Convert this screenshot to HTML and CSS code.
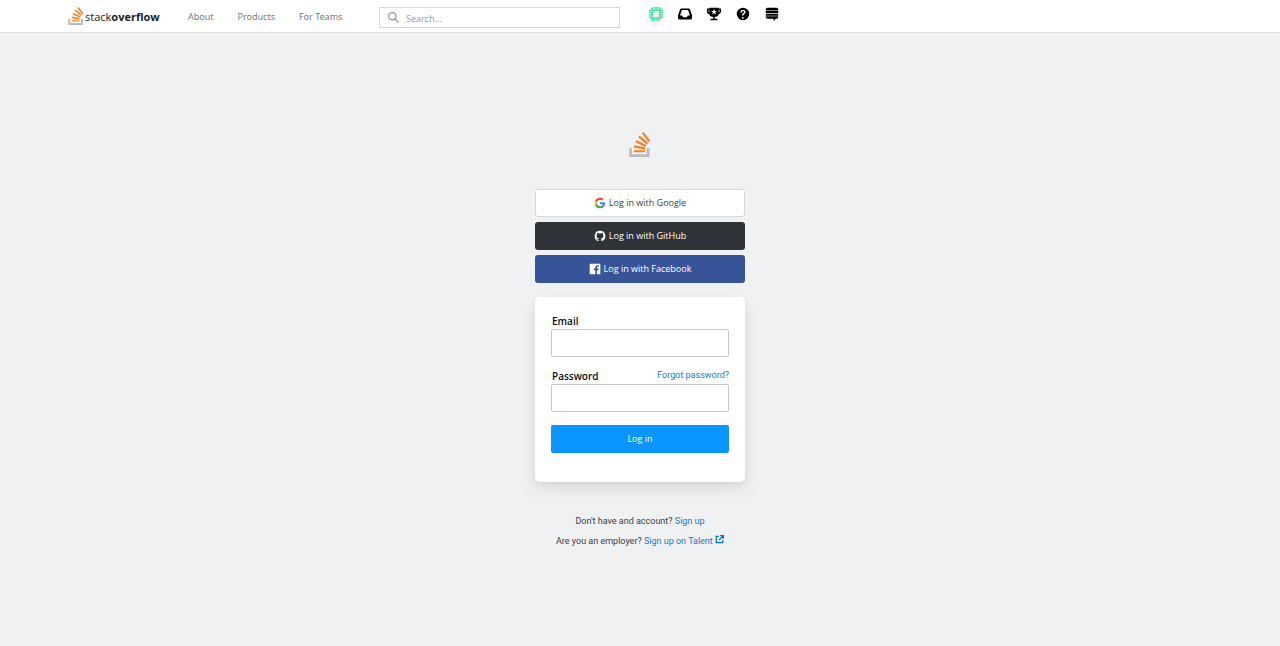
FILE: index.html
```html
<!DOCTYPE html>
<html lang="en">
<head>
    <meta charset="UTF-8">
    <meta name="viewport" content="width=device-width, initial-scale=1.0">
    <title>Log In - Stack Overflow</title>
    <link rel="stylesheet" href="styles.css">
</head>
<body>
    <header class="topbar">
        <a href="#" class="brand">
            <svg class="brand-glyph" viewBox="0 0 32 37" aria-hidden="true">
                <path d="M26 33v-9h4v13H0V24h4v9h22Z" fill="#bcbbbb"/>
                <path d="m21.500 0-2.700 2 9.900 13.300 2.700-2L21.500 0ZM26 18.400 13.300 7.800l2.100-2.500 12.700 10.600-2.100 2.500ZM9.100 15.200l15 7 1.400-3-15-7-1.400 3Zm14 10.790.68-2.950-16.100-3.350L7 23l16.100 2.990ZM23 30H7v-3h16v3Z" fill="#f48024"/>
            </svg>
            <span class="brand-name">stack<b>overflow</b></span>
        </a>
        <nav class="nav">
            <a href="#">About</a>
            <a href="#">Products</a>
            <a href="#">For Teams</a>
        </nav>
        <form class="search">
            <svg viewBox="0 0 18 18" aria-hidden="true"><path d="m18 16.500-5.140-5.180h-.35a7 7 0 1 0-1.190 1.190v.35L16.500 18l1.500-1.500ZM12 7A5 5 0 1 1 2 7a5 5 0 0 1 10 0Z"/></svg>
            <input type="text" placeholder="Search..." aria-label="Search">
        </form>
        <div class="icons">
            <a href="#" aria-label="Profile">
                <svg class="avatar" viewBox="0 0 14 14">
                    <path d="M3.500 3.500h7v7h-7z" fill="none" stroke="#48e5a2" stroke-width="1"/>
                    <path d="M3 1.500h8M3 12.500h8M1.500 3v8M12.500 3v8" fill="none" stroke="#48e5a2" stroke-width="3" stroke-dasharray="1.500 .6"/>
                    <path d="M1 3 3 1M11 1l2 2M1 11l2 2M11 13l2-2" stroke="#48e5a2" stroke-width="1"/>
                </svg>
            </a>
            <a href="#" aria-label="Inbox">
                <svg viewBox="0 0 18 18"><path fill-rule="evenodd" d="M4.500 2h9a2 2 0 0 1 1.850 1.300L18 10.500V14a2 2 0 0 1-2 2H2a2 2 0 0 1-2-2v-3.500l2.650-7.200A2 2 0 0 1 4.500 2Zm.6 2L2.600 11h2.700l1.600 2.200h4.200L12.700 11h2.700l-2.500-7H5.100Z"/></svg>
            </a>
            <a href="#" aria-label="Achievements">
                <svg viewBox="0 0 18 18"><path d="M15 2V1H3v1H0v4c0 1.600 1.400 3 3 3v1c.4 1.500 3 2.600 5 3v2H5s-1 1.500-1 2h10c0-.4-1-2-1-2h-3v-2c2-.4 4.600-1.500 5-3V9c1.600-.2 3-1.400 3-3V2h-3ZM3 7c-.5 0-1-.5-1-1V4h1v3Zm8.400 2.500L9 8 6.600 9.400l1-2.700L5 5h3l1-2.700L10 5h2.800l-2.300 1.800 1 2.700h-.1ZM16 6c0 .5-.5 1-1 1V4h1v2Z"/></svg>
            </a>
            <a href="#" aria-label="Help">
                <svg viewBox="0 0 18 18"><path d="M9 1a8 8 0 1 0 0 16A8 8 0 0 0 9 1Zm.81 13.120c-.02.71-.55 1.150-1.240 1.130-.66-.02-1.170-.49-1.150-1.200.02-.72.56-1.180 1.220-1.160.7.03 1.200.51 1.170 1.230ZM11.770 8a5.800 5.800 0 0 1-1.020.91l-.53.37c-.26.2-.42.43-.5.69a4 4 0 0 0-.09.75c0 .05-.03.16-.18.16H7.880c-.16 0-.18-.1-.18-.15.03-.66.12-1.210.4-1.660.4-.49.88-.9 1.430-1.220.16-.12.28-.25.38-.39a1.340 1.340 0 0 0 .02-1.710c-.24-.31-.51-.46-1.030-.46-.51 0-.8.26-1.020.6-.21.33-.18.73-.18 1.100H5.750c0-1.380.35-2.250 1.100-2.760.52-.35 1.170-.5 1.930-.5 1 0 1.790.18 2.490.71.64.5.98 1.180.98 2.120 0 .57-.2 1.050-.48 1.440Z"/></svg>
            </a>
            <a href="#" aria-label="Stack Exchange">
                <svg viewBox="0 0 18 18"><path d="M15 1H3a2 2 0 0 0-2 2v1.600h16V3a2 2 0 0 0-2-2ZM1 13c0 1.100.9 2 2 2h8v3l3-3h1a2 2 0 0 0 2-2v-1H1v1ZM17 5.200H1v2.600h16V5.200ZM17 8.600H1v2.700h16V8.600Z"/></svg>
            </a>
        </div>
    </header>

    <main class="login">
        <a href="#" class="login-logo" aria-label="Stack Overflow">
            <svg viewBox="0 0 32 37">
                <path d="M26 33v-9h4v13H0V24h4v9h22Z" fill="#bcbbbb"/>
                <path d="m21.500 0-2.700 2 9.900 13.300 2.700-2L21.500 0ZM26 18.400 13.300 7.800l2.100-2.500 12.700 10.600-2.100 2.500ZM9.100 15.200l15 7 1.400-3-15-7-1.400 3Zm14 10.790.68-2.950-16.100-3.350L7 23l16.100 2.990ZM23 30H7v-3h16v3Z" fill="#f48024"/>
            </svg>
        </a>

        <div class="social">
            <button type="button" class="btn google">
                <svg viewBox="0 0 18 18" aria-hidden="true">
                    <path d="M16.510 8H8.980v3h4.300c-.18 1-.74 1.480-1.600 2.040v2.010h2.600a7.800 7.800 0 0 0 2.380-5.880c0-.57-.05-.66-.15-1.170Z" fill="#4285f4"/>
                    <path d="M8.980 17c2.160 0 3.970-.72 5.300-1.940l-2.600-2a4.800 4.800 0 0 1-7.180-2.540H1.830v2.070A8 8 0 0 0 8.980 17Z" fill="#34a853"/>
                    <path d="M4.500 10.520a4.800 4.800 0 0 1 0-3.040V5.410H1.830a8 8 0 0 0 0 7.180l2.670-2.070Z" fill="#fbbc05"/>
                    <path d="M8.980 4.180c1.170 0 2.230.4 3.060 1.200l2.300-2.300A8 8 0 0 0 1.830 5.400L4.500 7.490a4.770 4.770 0 0 1 4.480-3.300Z" fill="#ea4335"/>
                </svg>
                Log in with Google
            </button>
            <button type="button" class="btn github">
                <svg viewBox="0 0 18 18" aria-hidden="true"><path d="M9 1a8 8 0 0 0-2.530 15.590c.4.07.55-.17.55-.38l-.01-1.490c-2.010.37-2.530-.49-2.690-.94-.09-.23-.48-.94-.82-1.130-.28-.15-.68-.52-.01-.53.63-.01 1.080.58 1.230.82.72 1.210 1.870.87 2.330.66.07-.52.28-.87.51-1.070-1.780-.2-3.640-.89-3.640-3.950 0-.87.31-1.590.82-2.150-.08-.2-.36-1.020.08-2.120 0 0 .67-.21 2.200.82a7.420 7.420 0 0 1 4 0c1.530-1.040 2.200-.82 2.200-.82.44 1.100.16 1.920.08 2.120.51.56.82 1.270.82 2.150 0 3.070-1.870 3.750-3.650 3.950.29.25.54.73.54 1.480l-.01 2.200c0 .21.15.46.55.38A8 8 0 0 0 9 1Z" fill="#fff"/></svg>
                Log in with GitHub
            </button>
            <button type="button" class="btn facebook">
                <svg viewBox="0 0 18 18" aria-hidden="true"><path d="M2 1a1 1 0 0 0-1 1v14a1 1 0 0 0 1 1h7.550v-6.200H7.460V8.400h2.090V6.610c0-2.070 1.260-3.200 3.110-3.200.88 0 1.640.07 1.870.1v2.160h-1.290c-1 0-1.190.48-1.190 1.180V8.400h2.390l-.31 2.400h-2.080V17H16a1 1 0 0 0 1-1V2a1 1 0 0 0-1-1H2Z" fill="#fff"/></svg>
                Log in with Facebook
            </button>
        </div>

        <form class="card">
            <div class="field">
                <div class="field-head">
                    <label for="email">Email</label>
                </div>
                <input type="email" id="email">
            </div>
            <div class="field">
                <div class="field-head">
                    <label for="password">Password</label>
                    <a href="#">Forgot password?</a>
                </div>
                <input type="password" id="password">
            </div>
            <button type="submit" class="submit">Log in</button>
        </form>

        <div class="signup">
            <p>Don't have and account? <a href="#">Sign up</a></p>
            <p>Are you an employer? <a href="#">Sign up on Talent
                <svg viewBox="0 0 14 14" aria-hidden="true"><path d="M6 2H2v10h10V8M8 1h5v5M13 1 6 8" fill="none" stroke="#0074cc" stroke-width="2"/></svg></a></p>
        </div>
    </main>
</body>
</html>
```

FILE: styles.css
```css
* {
    box-sizing: border-box;
}

body {
    font-family: "Open Sans", "Noto Sans", sans-serif;
    font-size: 9px;
    line-height: 12px;
    background-color: #f0f1f3;
    color: #3b4045;
    margin: 0;
}

a {
    color: #1a77cf;
    text-decoration: none;
}

svg {
    display: block;
}

.topbar {
    display: flex;
    align-items: center;
    height: 33px;
    padding-left: 68px;
    background-color: #fff;
    border-bottom: 1px solid #e1e3e5;
}

.brand {
    display: flex;
    align-items: center;
    gap: 1px;
    width: 120px;
    color: #222;
}

.brand-glyph {
    width: 16px;
    height: 18px;
}

.brand-name {
    font-size: 11px;
    padding-top: 2px;
}

.nav {
    display: flex;
    gap: 24px;
    width: 191px;
    padding-top: 2px;
    font-family: "Noto Sans", sans-serif;
}

.nav a {
    color: #777b80;
}

.search {
    display: flex;
    align-items: center;
    gap: 7px;
    width: 241px;
    height: 21px;
    margin-top: 2px;
    padding: 0 8px;
    border: 1px solid #d6d9dc;
}

.search svg {
    width: 11px;
    height: 11px;
    fill: #8e93a5;
}

.search input {
    flex: 1;
    border: none;
    outline: none;
    padding: 2px 0 0;
    font-family: "Noto Sans", sans-serif;
    font-size: 9px;
}

.search input::placeholder {
    color: #9a9fac;
}

.icons {
    display: flex;
    gap: 15px;
    margin-left: 29px;
    padding-bottom: 4px;
}

.icons svg {
    width: 14px;
    height: 14px;
}

.login {
    width: 210px;
    margin: 0 auto;
    padding-top: 99px;
}

.login-logo svg {
    width: 22px;
    height: 25px;
    margin: 0 auto 32px;
}

.social {
    display: grid;
    gap: 5px;
    margin-bottom: 14px;
}

.btn {
    display: flex;
    align-items: center;
    justify-content: center;
    gap: 3px;
    height: 28px;
    border: 1px solid transparent;
    border-radius: 3px;
    font: inherit;
    color: #fff;
    cursor: pointer;
}

.btn svg {
    width: 12px;
    height: 12px;
}

.google {
    background-color: #fff;
    border-color: #d6d9dc;
    color: #3b4045;
}

.github {
    background-color: #2f3337;
}

.facebook {
    background-color: #385499;
}

.card {
    background-color: #fff;
    border-radius: 5px;
    box-shadow: 0 7px 18px rgba(0, 0, 0, 0.09), 0 2px 5px rgba(0, 0, 0, 0.05);
    padding: 18px 16px 29px;
}

.field {
    margin-bottom: 13px;
}

.field-head {
    display: flex;
    justify-content: space-between;
    padding: 0 0 2px 1px;
}

.field-head label {
    font-size: 10px;
    font-weight: 600;
    color: #0c0d0e;
}

.field-head a,
.signup {
    font-family: Roboto, sans-serif;
}

.field-head a {
    line-height: 10px;
}

.field input {
    display: block;
    width: 100%;
    height: 28px;
    border: 1px solid #c4c8cc;
    border-radius: 2px;
    font: inherit;
}

.submit {
    width: 100%;
    height: 28px;
    border: none;
    border-radius: 2px;
    background-color: #0a95ff;
    color: #fff;
    font: inherit;
    cursor: pointer;
}

.signup {
    margin-top: 33px;
    text-align: center;
}

.signup p {
    margin: 0 0 8px;
}

.signup svg {
    display: inline-block;
    width: 9px;
    height: 9px;
}
```
